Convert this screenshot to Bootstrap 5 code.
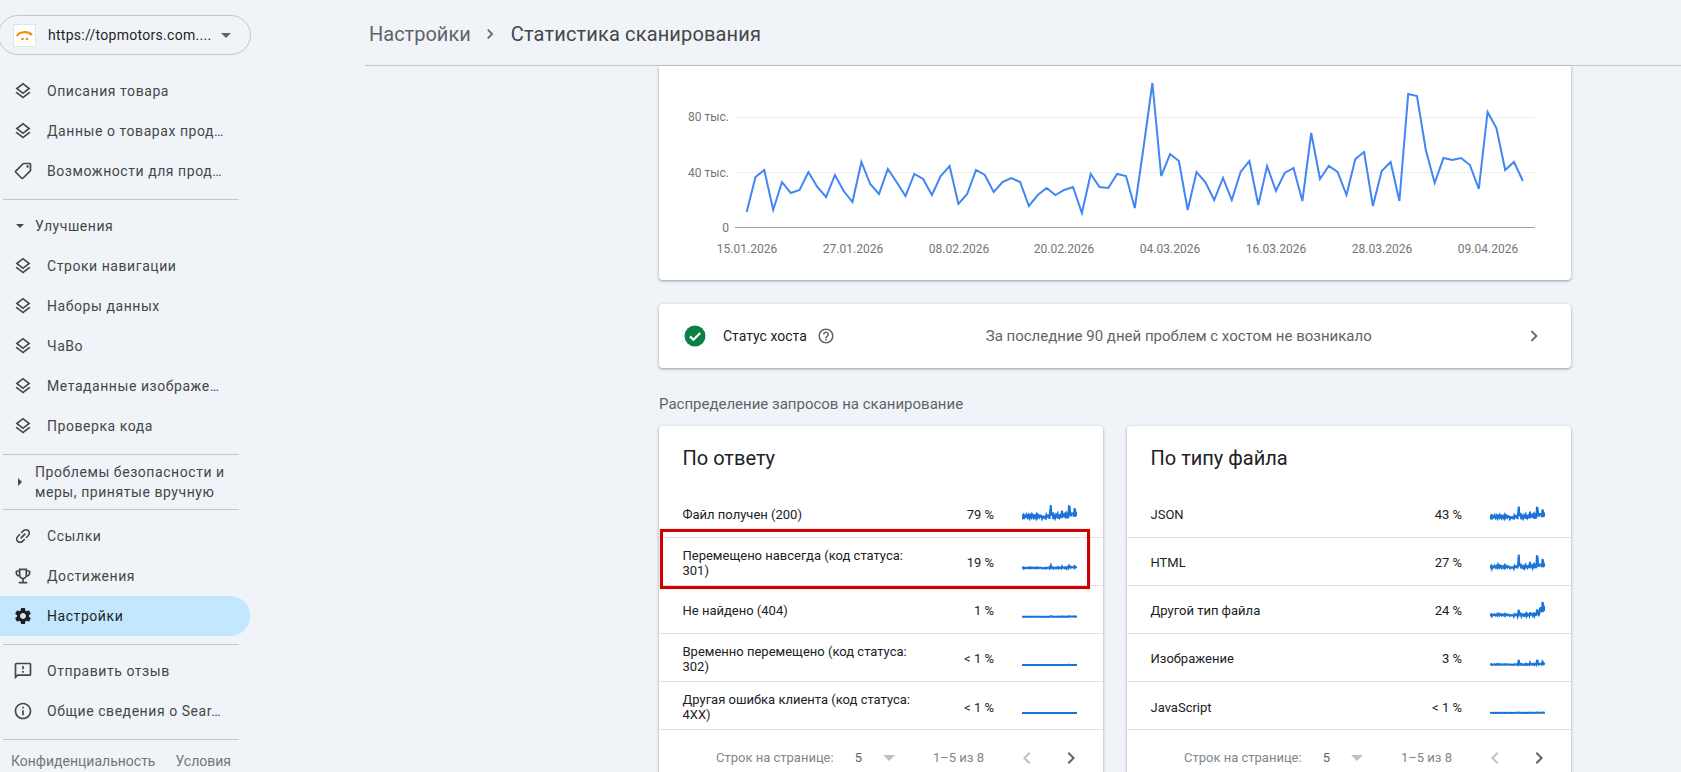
<!DOCTYPE html>
<html lang="ru">
<head>
  <meta charset="UTF-8">
  <meta name="viewport" content="width=device-width, initial-scale=1.0">
  <title>Статистика сканирования</title>
  <link href="https://cdn.jsdelivr.net/npm/bootstrap@5.3.0/dist/css/bootstrap.min.css" rel="stylesheet">
  <style>
    html, body { height: 100%; overflow: hidden; }
    body { background: #f0f4f9; font-family: Roboto, "Liberation Sans", sans-serif; color: #1f1f1f; }
    .side { width: 365px; flex: none; padding-top: 15px; }
    .side-inner { width: 250px; }
    .prop-pill { height: 40px; margin: 0 -1px 16px -2px; border: 1px solid #c4c7c5; border-radius: 20px; padding-left: 14px; font-size: 14px; letter-spacing: .28px; }
    .fav { width: 23px; height: 23px; background: #fff; border: 1px solid #e3e3e3; margin-right: 12px; flex: none; }
    .caret-down { width: 0; height: 0; border-left: 5px solid transparent; border-right: 5px solid transparent; border-top: 5px solid #5f6368; margin-left: 10px; }
    .nav-row { height: 40px; padding-left: 13px; font-size: 14px; letter-spacing: .56px; color: #444746; }
    .nav-row svg { width: 20px; height: 20px; fill: #444746; margin-right: 14px; flex: none; }
    .nav-row.on { background: #c2e7ff; color: #1f1f1f; border-radius: 0 20px 20px 0; }
    .nav-row.on svg { fill: #1f1f1f; }
    .nudge-up { margin-top: -2px; }
    .side-rule { height: 1px; background: #c4c7c5; width: 236px; margin: 8px 0 0 3px; }
    .sect { padding-left: 16px; font-size: 14px; letter-spacing: .56px; color: #444746; line-height: 20px; }
    .sect-open { height: 40px; margin-top: 6px; }
    .sect-shut { height: 54px; }
    .tri-down { width: 0; height: 0; border-left: 4px solid transparent; border-right: 4px solid transparent; border-top: 4px solid #444746; margin-right: 11px; flex: none; }
    .tri-right { width: 0; height: 0; border-top: 4px solid transparent; border-bottom: 4px solid transparent; border-left: 4px solid #444746; margin: 0 13px 0 2px; flex: none; }
    .foot-links { font-size: 14px; color: #747775; padding: 11px 0 0 11px; gap: 20px; }
    .main-col { min-width: 0; }
    .top-bar { height: 66px; border-bottom: 1px solid #c4c7c5; padding: 3px 0 0 4px; flex: none; font-size: 20px; letter-spacing: .15px; color: #444746; }
    .top-bar .crumb { color: #5f6368; letter-spacing: 0; }
    .top-bar svg { width: 20px; height: 20px; fill: #5f6368; margin: 0 11px 0 9px; }
    .page-body { padding: 0 110px 0 294px; }
    .gsc-card { border: 0; background: #fff; box-shadow: 0 1px 2px rgba(60,64,67,.3), 0 1px 3px 1px rgba(60,64,67,.15); }
    .chart-card { height: 214px; border-radius: 0 0 4px 4px; }
    .chart-card svg { display: block; }
    .chart-card text { font-size: 12px; fill: #757575; font-family: Roboto, sans-serif; }
    .host-card { height: 64px; margin-top: 24px; border-radius: 4px; font-size: 14px; padding: 0 26px 0 24px; }
    .host-card .ok-ic { width: 24px; height: 24px; margin-right: 16px; }
    .host-card .q-ic { width: 18px; height: 18px; fill: #5f6368; margin-left: 10px; }
    .host-name { color: #202124; }
    .host-msg { color: #5f6368; margin-left: 151px; font-size: 15px; }
    .host-card .go-ic { width: 22px; height: 22px; fill: #5f6368; margin-left: auto; }
    .dist-label { font-size: 15px; color: #5f6368; margin: 26px 0 12px; line-height: 20px; }
    .dist-row { gap: 24px; }
    .dist-card { flex: 1 1 0; border-radius: 4px; height: 400px; position: relative; }
    .dist-title { height: 64px; padding-left: 23.5px; font-size: 20px; color: #202124; }
    .resp-list { border-radius: 0; }
    .resp-row { height: 48px; padding: 2px 26px 0 23.5px; font-size: 13px; line-height: 15px; color: #202124; background: transparent; border-bottom: 1px solid #e0e0e0; }
    .resp-name { width: 235px; }
    .resp-pct { margin-left: auto; white-space: nowrap; }
    .spark { width: 55px; height: 24px; margin-left: 28px; flex: none; }
    .spark polyline { fill: none; stroke: #1a73d8; stroke-width: 2; }
    .pager { height: 56px; font-size: 13px; color: #80868b; border-top: 1px solid #e0e0e0; margin-top: -1px; padding-right: 20px; }
    .pager svg { width: 24px; height: 24px; }
    .pager-next { margin-left: 20px; }
    .pager-num { color: #5f6368; margin: 0 21px; }
    .pager-range { margin: 0 31px 0 38px; }
    .pager-caret { width: 0; height: 0; border-left: 6px solid transparent; border-right: 6px solid transparent; border-top: 6px solid #bdc1c6; }
    .red-mark { position: absolute; left: 1px; top: 103px; width: 430px; height: 60px; border: 3px solid #cc0000; box-shadow: 0 0 1px rgba(204,0,0,.5); }
  </style>
</head>
<body class="d-flex">

  <svg width="0" height="0" class="position-absolute">
    <symbol id="i-layers" viewBox="0 0 24 24"><path d="M11.99 18.54l-7.37-5.73L3 14.07l9 7 9-7-1.63-1.27-7.38 5.74zM12 16l7.36-5.73L21 9l-9-7-9 7 1.63 1.27L12 16zm0-11.47L17.74 9 12 13.47 6.26 9 12 4.53z"/></symbol>
    <symbol id="i-tag" viewBox="0 0 24 24"><g transform="matrix(-1 0 0 1 24 0)"><path d="M21.41 11.41l-8.83-8.83c-.37-.37-.88-.58-1.41-.58H4c-1.1 0-2 .9-2 2v7.17c0 .53.21 1.04.59 1.41l8.83 8.83c.78.78 2.05.78 2.83 0l7.17-7.17c.78-.78.78-2.04-.01-2.83zM12.83 20L4 11.17V4h7.17L20 12.83 12.83 20z"/><circle cx="6.5" cy="6.5" r="1.5"/></g></symbol>
    <symbol id="i-link" viewBox="0 0 24 24"><path transform="rotate(-45 12 12)" d="M3.9 12c0-1.71 1.39-3.1 3.1-3.1h4V7H7c-2.76 0-5 2.24-5 5s2.24 5 5 5h4v-1.9H7c-1.71 0-3.1-1.39-3.1-3.1zM8 13h8v-2H8v2zm9-6h-4v1.9h4c1.71 0 3.1 1.39 3.1 3.1s-1.39 3.1-3.1 3.1h-4V17h4c2.76 0 5-2.24 5-5s-2.24-5-5-5z"/></symbol>
    <symbol id="i-trophy" viewBox="0 0 24 24"><path d="M19 5h-2V3H7v2H5c-1.1 0-2 .9-2 2v1c0 2.55 1.92 4.63 4.39 4.94.63 1.5 1.98 2.63 3.61 2.96V19H7v2h10v-2h-4v-3.1c1.63-.33 2.98-1.46 3.61-2.96C19.08 12.63 21 10.55 21 8V7c0-1.1-.9-2-2-2zM5 8V7h2v3.82C5.84 10.4 5 9.3 5 8zm7 6c-1.65 0-3-1.35-3-3V5h6v6c0 1.65-1.35 3-3 3zm7-6c0 1.3-.84 2.4-2 2.82V7h2v1z"/></symbol>
    <symbol id="i-gear" viewBox="0 0 24 24"><path d="M19.14 12.94c.04-.3.06-.61.06-.94 0-.32-.02-.64-.07-.94l2.03-1.58c.18-.14.23-.41.12-.61l-1.92-3.32c-.12-.22-.37-.29-.59-.22l-2.39.96c-.5-.38-1.03-.7-1.62-.94l-.36-2.54c-.04-.24-.24-.41-.48-.41h-3.84c-.24 0-.43.17-.47.41l-.36 2.54c-.59.24-1.13.57-1.62.94l-2.39-.96c-.22-.08-.47 0-.59.22L2.74 8.87c-.12.21-.08.47.12.61l2.03 1.58c-.05.3-.09.63-.09.94s.02.64.07.94l-2.03 1.58c-.18.14-.23.41-.12.61l1.92 3.32c.12.22.37.29.59.22l2.39-.96c.5.38 1.03.7 1.62.94l.36 2.54c.05.24.24.41.48.41h3.84c.24 0 .44-.17.47-.41l.36-2.54c.59-.24 1.13-.56 1.62-.94l2.39.96c.22.08.47 0 .59-.22l1.92-3.32c.12-.22.07-.47-.12-.61l-2.01-1.58zM12 15.6c-1.98 0-3.6-1.62-3.6-3.6s1.62-3.6 3.6-3.6 3.6 1.62 3.6 3.6-1.62 3.6-3.6 3.6z"/></symbol>
    <symbol id="i-feedback" viewBox="0 0 24 24"><path d="M20 2H4c-1.1 0-1.99.9-1.99 2L2 22l4-4h14c1.1 0 2-.9 2-2V4c0-1.1-.9-2-2-2zm0 14H5.17L4 17.17V4h16v12zM11 12h2v2h-2zm0-6h2v4h-2z"/></symbol>
    <symbol id="i-info" viewBox="0 0 24 24"><path d="M11 7h2v2h-2zm0 4h2v6h-2zm1-9C6.48 2 2 6.48 2 12s4.48 10 10 10 10-4.48 10-10S17.52 2 12 2zm0 18c-4.41 0-8-3.59-8-8s3.59-8 8-8 8 3.59 8 8-3.59 8-8 8z"/></symbol>
    <symbol id="i-help" viewBox="0 0 24 24"><path d="M11 18h2v-2h-2v2zm1-16C6.48 2 2 6.48 2 12s4.48 10 10 10 10-4.48 10-10S17.52 2 12 2zm0 18c-4.41 0-8-3.59-8-8s3.59-8 8-8 8 3.59 8 8-3.59 8-8 8zm0-14c-2.21 0-4 1.79-4 4h2c0-1.1.9-2 2-2s2 .9 2 2c0 2-3 1.75-3 5h2c0-2.25 3-2.5 3-5 0-2.21-1.79-4-4-4z"/></symbol>
    <symbol id="i-next" viewBox="0 0 24 24"><path d="M10 6L8.59 7.41 13.17 12l-4.58 4.59L10 18l6-6z"/></symbol>
    <symbol id="i-prev" viewBox="0 0 24 24"><path d="M15.41 7.41L14 6l-6 6 6 6 1.41-1.41L10.83 12z"/></symbol>
  </svg>

  <aside class="side">
    <div class="side-inner">
      <div class="prop-pill d-flex align-items-center">
        <span class="fav d-flex align-items-center justify-content-center">
          <svg width="17" height="12" viewBox="0 0 17 12"><path d="M1 7C3 2.5 12 1.8 16 6" fill="none" stroke="#f28b00" stroke-width="2.2"/><circle cx="6.5" cy="10" r="1.3" fill="#f28b00"/><circle cx="11" cy="10" r="1.3" fill="#f28b00"/></svg>
        </span>
        <span>https://topmotors.com....</span>
        <span class="caret-down"></span>
      </div>

      <div class="nav-row d-flex align-items-center"><svg><use href="#i-layers"/></svg>Описания товара</div>
      <div class="nav-row d-flex align-items-center"><svg><use href="#i-layers"/></svg>Данные о товарах прод…</div>
      <div class="nav-row d-flex align-items-center"><svg><use href="#i-tag"/></svg>Возможности для прод…</div>
      <div class="side-rule"></div>

      <div class="sect sect-open d-flex align-items-center"><span class="tri-down"></span>Улучшения</div>
      <div class="nav-row d-flex align-items-center"><svg><use href="#i-layers"/></svg>Строки навигации</div>
      <div class="nav-row d-flex align-items-center"><svg><use href="#i-layers"/></svg>Наборы данных</div>
      <div class="nav-row d-flex align-items-center"><svg><use href="#i-layers"/></svg>ЧаВо</div>
      <div class="nav-row d-flex align-items-center"><svg><use href="#i-layers"/></svg>Метаданные изображе…</div>
      <div class="nav-row d-flex align-items-center"><svg><use href="#i-layers"/></svg>Проверка кода</div>
      <div class="side-rule"></div>

      <div class="sect sect-shut d-flex align-items-center"><span class="tri-right"></span><span>Проблемы безопасности и<br>меры, принятые вручную</span></div>
      <div class="side-rule mt-0 mb-2"></div>

      <div class="nav-row nudge-up d-flex align-items-center"><svg><use href="#i-link"/></svg>Ссылки</div>
      <div class="nav-row d-flex align-items-center"><svg><use href="#i-trophy"/></svg>Достижения</div>
      <div class="nav-row on d-flex align-items-center"><svg><use href="#i-gear"/></svg>Настройки</div>
      <div class="side-rule mb-2"></div>

      <div class="nav-row nudge-up d-flex align-items-center"><svg><use href="#i-feedback"/></svg>Отправить отзыв</div>
      <div class="nav-row d-flex align-items-center"><svg><use href="#i-info"/></svg>Общие сведения о Sear…</div>
      <div class="side-rule"></div>

      <div class="foot-links d-flex"><span>Конфиденциальность</span><span>Условия</span></div>
    </div>
  </aside>

  <main class="main-col flex-grow-1 d-flex flex-column">
    <div class="top-bar d-flex align-items-center">
      <span class="crumb">Настройки</span>
      <svg><use href="#i-next"/></svg>
      <span>Статистика сканирования</span>
    </div>

    <div class="page-body">
      <div class="gsc-card chart-card">
        <svg width="912" height="214" viewBox="659 66 912 214">
          <line x1="735" x2="1535" y1="117.5" y2="117.5" stroke="#eeeeee"/>
          <line x1="735" x2="1535" y1="172.5" y2="172.5" stroke="#eeeeee"/>
          <line x1="735" x2="1535" y1="227.5" y2="227.5" stroke="#9e9e9e"/>
          <text x="729" y="121" text-anchor="end">80 тыс.</text>
          <text x="729" y="177" text-anchor="end">40 тыс.</text>
          <text x="729" y="232" text-anchor="end">0</text>
          <text x="747" y="253" text-anchor="middle">15.01.2026</text>
          <text x="853" y="253" text-anchor="middle">27.01.2026</text>
          <text x="959" y="253" text-anchor="middle">08.02.2026</text>
          <text x="1064" y="253" text-anchor="middle">20.02.2026</text>
          <text x="1170" y="253" text-anchor="middle">04.03.2026</text>
          <text x="1276" y="253" text-anchor="middle">16.03.2026</text>
          <text x="1382" y="253" text-anchor="middle">28.03.2026</text>
          <text x="1488" y="253" text-anchor="middle">09.04.2026</text>
          <polyline id="crawlLine" fill="none" stroke="#4285f4" stroke-width="2"/>
        </svg>
      </div>

      <div class="gsc-card host-card d-flex align-items-center">
        <svg class="ok-ic" viewBox="0 0 24 24"><circle cx="12" cy="12" r="10.5" fill="#0d8043"/><path d="M7 12.4l3.4 3.4L17.2 9" fill="none" stroke="#fff" stroke-width="2.2"/></svg>
        <span class="host-name">Статус хоста</span>
        <svg class="q-ic"><use href="#i-help"/></svg>
        <span class="host-msg">За последние 90 дней проблем с хостом не возникало</span>
        <svg class="go-ic"><use href="#i-next"/></svg>
      </div>

      <div class="dist-label">Распределение запросов на сканирование</div>

      <div class="dist-row d-flex">
        <div class="gsc-card dist-card">
          <div class="dist-title d-flex align-items-center">По ответу</div>
          <div class="list-group list-group-flush resp-list" id="respList"></div>
          <div class="pager d-flex align-items-center justify-content-end">
            <span>Строк на странице:</span><span class="pager-num">5</span><span class="pager-caret"></span><span class="pager-range">1–5 из 8</span>
            <svg fill="#bdc1c6"><use href="#i-prev"/></svg><svg fill="#5f6368" class="pager-next"><use href="#i-next"/></svg>
          </div>
          <div class="red-mark"></div>
        </div>
        <div class="gsc-card dist-card">
          <div class="dist-title d-flex align-items-center">По типу файла</div>
          <div class="list-group list-group-flush resp-list" id="typeList"></div>
          <div class="pager d-flex align-items-center justify-content-end">
            <span>Строк на странице:</span><span class="pager-num">5</span><span class="pager-caret"></span><span class="pager-range">1–5 из 8</span>
            <svg fill="#bdc1c6"><use href="#i-prev"/></svg><svg fill="#5f6368" class="pager-next"><use href="#i-next"/></svg>
          </div>
        </div>
      </div>
    </div>
  </main>

  <script>
    // y values of the line, read off the reference (x step is 8.82px)
    const crawl = [212,177,170,210,182,193,190,172,187,197,175,191,202,162,184,194,169,182,196,174,179,195,176,166,204,194,170,175,192,182,178,182,206,195,188,195,190,187,213,174,187,188,174,176,208,147,83,176,154,161,210,172,182,200,178,200,172,161,205,166,191,173,168,201,133,179,166,172,195,159,152,206,171,162,201,94,96,150,183,158,160,158,165,189,112,128,170,162,181];

    const linePts = crawl.map((y, i) => (746.7 + i * 8.82).toFixed(1) + ',' + y).join(' ');
    document.getElementById('crawlLine').setAttribute('points', linePts);

    function sparkline(k, pow, tailFrom, tailMul) {
      const pts = crawl.map((y, i) => {
        const v = (227 - y) / 100;
        let h = k * Math.pow(v, pow);
        if (i >= tailFrom) h *= tailMul;
        return (i * 55 / (crawl.length - 1)).toFixed(1) + ',' + (18 - h).toFixed(1);
      });
      return '<svg class="spark" viewBox="0 0 55 24"><polyline points="' + pts.join(' ') + '"/></svg>';
    }

    function fillRows(id, rows) {
      document.getElementById(id).innerHTML = rows.map(r =>
        '<div class="list-group-item resp-row d-flex align-items-center">' +
        '<span class="resp-name">' + r[0] + '</span><span class="resp-pct">' + r[1] + '</span>' +
        sparkline(r[2], r[3], r[4] || 999, r[5] || 1) + '</div>').join('');
    }

    fillRows('respList', [
      ['Файл получен (200)', '79 %', 11, 1],
      ['Перемещено навсегда (код статуса: 301)', '19 %', 2.6, 1],
      ['Не найдено (404)', '1 %', .6, 1],
      ['Временно перемещено (код статуса: 302)', '&lt; 1 %', .15, 1],
      ['Другая ошибка клиента (код статуса: 4XX)', '&lt; 1 %', 0, 1]
    ]);
    fillRows('typeList', [
      ['JSON', '43 %', 10, 1],
      ['HTML', '27 %', 8, 1.6],
      ['Другой тип файла', '24 %', 5, 1, 80, 2.6],
      ['Изображение', '3 %', 2.5, 2],
      ['JavaScript', '&lt; 1 %', .4, 1]
    ]);
  </script>
</body>
</html>
